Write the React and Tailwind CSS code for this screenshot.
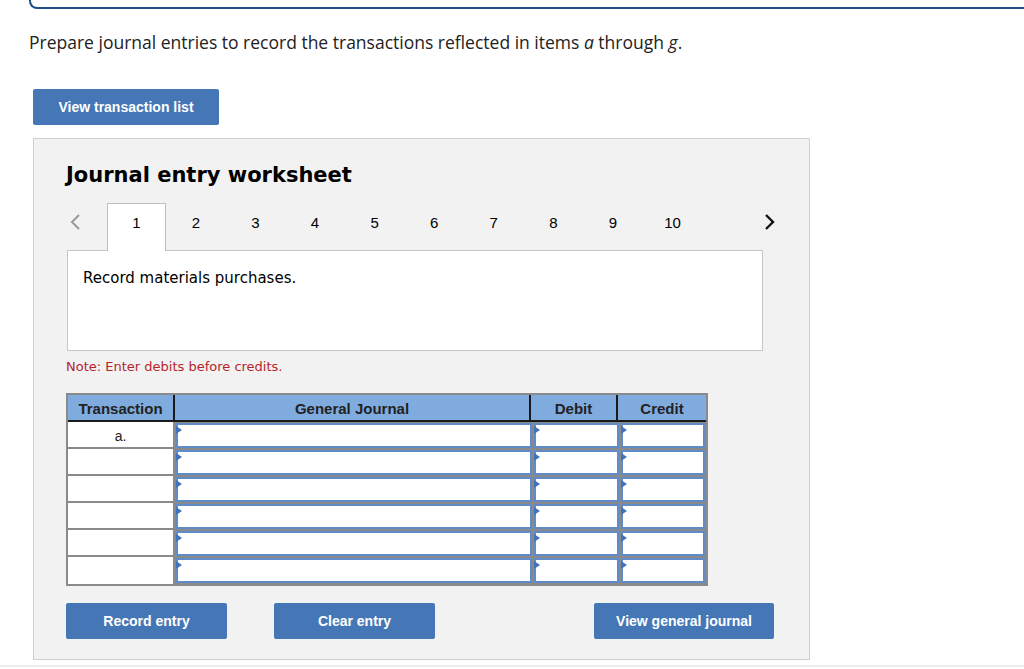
import React from "react";

const tabs = [1, 2, 3, 4, 5, 6, 7, 8, 9, 10];

function InputCell({ w }) {
  return (
    <div className={`${w} h-[27px] bg-[#8a8a8a] p-[1px]`}>
      <div className="relative h-full w-full border-2 border-[#5f8cc8] bg-white">
        <div className="absolute left-[-2px] top-[1px] h-0 w-0 border-y-[4px] border-l-[6px] border-y-transparent border-l-[#3f74bd]" />
      </div>
    </div>
  );
}

export default function App() {
  const rows = ["a.", "", "", "", "", ""];
  return (
    <div className="h-[669px] w-[1024px] overflow-hidden bg-white" style={{ fontFamily: "'Open Sans', Lato, sans-serif" }}>
      <div className="ml-[29px] h-[9px] rounded-bl-[8px] border-b-2 border-l-2 border-[#1f4e8a]" />
      <p className="ml-[29px] mt-[21px] text-[17.5px] leading-[24px] text-[#222]">
        Prepare journal entries to record the transactions reflected in items <i>a</i> through <i>g</i>.
      </p>
      <button className="ml-[33px] mt-[35px] flex h-[36px] w-[186px] items-center justify-center rounded-[2px] bg-[#4577b6] text-[14px] font-bold text-white" style={{ fontFamily: "'Liberation Sans', Arial, sans-serif" }}>
        View transaction list
      </button>
      <div className="ml-[33px] mt-[13px] w-[777px] border border-[#cfcfcf] bg-[#f2f2f2] pb-[20px] pl-[32px] pt-[23px]">
        <h2 className="text-[21px] font-bold leading-[26px] text-black" style={{ fontFamily: "'DejaVu Sans', Verdana, sans-serif" }}>
          Journal entry worksheet
        </h2>
        <div className="relative z-10 mt-[15px] flex h-[48px] w-[710px] items-start" style={{ fontFamily: "'Liberation Sans', Arial, sans-serif" }}>
          <div className="flex h-[38px] w-[41px] items-center pl-[3px]">
            <svg width="12" height="18" viewBox="0 0 12 18">
              <path d="M10 2 L3 9 L10 16" fill="none" stroke="#9a9a9a" strokeWidth="2" />
            </svg>
          </div>
          {tabs.map((t) =>
            t === 1 ? (
              <div key={t} className="flex h-[48px] w-[59px] justify-center border-x border-t border-[#bdbdbd] bg-white pt-[9px] text-[15px] leading-[20px] text-black">
                {t}
              </div>
            ) : (
              <div key={t} className="flex h-[36px] w-[59.6px] justify-center pt-[10px] text-[15px] leading-[20px] text-black">
                {t}
              </div>
            )
          )}
          <div className="ml-auto flex h-[38px] items-center">
            <svg width="12" height="18" viewBox="0 0 12 18">
              <path d="M2 2 L9 9 L2 16" fill="none" stroke="#111" strokeWidth="2.4" />
            </svg>
          </div>
        </div>
        <div className="-mt-[1px] ml-[1px] h-[101px] w-[696px] border border-[#c6c6c6] bg-white pl-[15px] pt-[17px]">
          <p className="leading-[20px] text-black" style={{ fontFamily: "'DejaVu Sans', Verdana, sans-serif", fontSize: "15px" }}>
            Record materials purchases.
          </p>
        </div>
        <p className="mt-[8px] leading-[16px] text-[#b5262b]" style={{ fontFamily: "'DejaVu Sans', Verdana, sans-serif", fontSize: "13px" }}>
          Note: Enter debits before credits.
        </p>
        <div className="mt-[18px] w-[642px] border-2 border-[#8a8a8a]" style={{ fontFamily: "'Liberation Sans', Arial, sans-serif" }}>
          <div className="flex h-[27px] border-b-2 border-[#1a1a1a] bg-[#80abdf] text-[15px] font-bold text-[#222]">
            <div className="flex w-[107px] items-center justify-center border-r-2 border-[#1a1a1a] pt-[3px]">Transaction</div>
            <div className="flex w-[356px] items-center justify-center border-r-2 border-[#1a1a1a] pt-[3px]">General Journal</div>
            <div className="flex w-[87px] items-center justify-center border-r-2 border-[#1a1a1a] pt-[3px]">Debit</div>
            <div className="flex w-[88px] items-center justify-center pt-[3px]">Credit</div>
          </div>
          {rows.map((r, i) => (
            <div key={i} className="flex">
              <div className={`flex h-[27px] w-[107px] items-center justify-center bg-white pt-[3px] text-[14px] text-[#222] ${i < 5 ? "border-b-2" : ""} border-r-2 border-[#8a8a8a]`}>
                {r}
              </div>
              <InputCell w="w-[358px]" />
              <InputCell w="w-[87px]" />
              <InputCell w="w-[86px]" />
            </div>
          ))}
        </div>
        <div className="mt-[17px] flex text-[14px] font-bold text-white" style={{ fontFamily: "'Liberation Sans', Arial, sans-serif" }}>
          <button className="flex h-[36px] w-[161px] items-center justify-center rounded-[2px] bg-[#4577b6]">Record entry</button>
          <button className="ml-[47px] flex h-[36px] w-[161px] items-center justify-center rounded-[2px] bg-[#4577b6]">Clear entry</button>
          <button className="ml-[159px] flex h-[36px] w-[180px] items-center justify-center rounded-[2px] bg-[#4577b6]">View general journal</button>
        </div>
      </div>
      <div className="mt-[5px] h-[2px] w-full bg-[#ececec]" />
    </div>
  );
}
